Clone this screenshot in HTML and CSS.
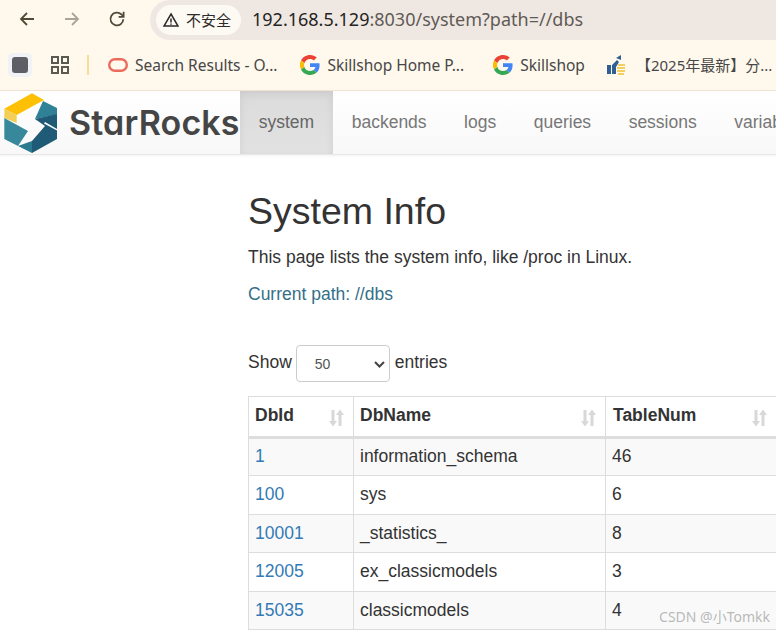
FILE: index.html
```html
<!DOCTYPE html>
<html lang="zh">
<head>
<meta charset="utf-8">
<title>System Info</title>
<link rel="stylesheet" href="styles.css">
</head>
<body>
<div class="window">
  <div class="toolbar">
    <div class="tool-buttons">
      <svg class="tool-icon" viewBox="0 0 18 18"><path d="M16 9H3M9 3 3 9l6 6" class="ic-dark"/></svg>
      <svg class="tool-icon" viewBox="0 0 18 18"><path d="M2 9h13M9 3l6 6-6 6" class="ic-faded"/></svg>
      <svg class="tool-icon" viewBox="0 0 18 18"><path d="M15.3 9.2A6.4 6.4 0 1 1 13.4 4.4L15.4 6.4" class="ic-dark"/><path d="M15.6 1.8v5h-5" class="ic-dark"/></svg>
    </div>
    <div class="omnibox">
      <div class="chip">
        <svg class="warn" viewBox="0 0 16 16"><path d="M8 2 15 14H1Z" class="ic-warn"/><path d="M8 6.4v4M8 11.4v1.4" class="ic-warn"/></svg>
        <span>不安全</span>
      </div>
      <div class="url"><span class="host">192.168.5.129</span>:8030/system?path=//dbs</div>
    </div>
  </div>

  <div class="bookmarks">
    <div class="bm-square"><span></span></div>
    <svg class="bm-grid" viewBox="0 0 18 18"><path d="M1 1h6v6H1zM11 1h6v6h-6zM1 11h6v6H1zM11 11h6v6h-6z"/></svg>
    <div class="bm-divider"></div>
    <div class="bm bm-oracle">
      <svg class="oracle" viewBox="0 0 20 14"><rect x="1.200" y="1.200" width="17.600" height="11.600" rx="5.800"/></svg>
      <span>Search Results - O...</span>
    </div>
    <div class="bm bm-g1">
      <svg class="g" viewBox="0 0 48 48"><path fill="#EA4335" d="M24 9.500c3.500 0 6.700 1.200 9.200 3.600l6.900-6.900C35.900 2.400 30.500 0 24 0 14.600 0 6.500 5.400 2.600 13.200l8 6.200C12.400 13.700 17.700 9.500 24 9.500z"/><path fill="#4285F4" d="M47 24.500c0-1.600-.1-3.100-.4-4.500H24v9h12.900c-.6 3-2.200 5.500-4.700 7.200l7.700 6C44.400 38 47 31.800 47 24.500z"/><path fill="#FBBC05" d="M10.500 28.600A14.500 14.500 0 0 1 10.500 19.400l-8-6.200a24 24 0 0 0 0 21.600z"/><path fill="#34A853" d="M24 48c6.500 0 11.900-2.100 15.900-5.800l-7.700-6c-2.200 1.400-4.900 2.300-8.200 2.300-6.300 0-11.600-4.200-13.500-9.900l-8 6.200C6.500 42.600 14.600 48 24 48z"/></svg>
      <span>Skillshop Home P...</span>
    </div>
    <div class="bm bm-g2">
      <svg class="g" viewBox="0 0 48 48"><path fill="#EA4335" d="M24 9.500c3.500 0 6.700 1.200 9.200 3.600l6.900-6.900C35.900 2.400 30.500 0 24 0 14.600 0 6.500 5.400 2.600 13.200l8 6.200C12.400 13.700 17.700 9.500 24 9.500z"/><path fill="#4285F4" d="M47 24.500c0-1.600-.1-3.100-.4-4.500H24v9h12.900c-.6 3-2.200 5.500-4.700 7.200l7.700 6C44.400 38 47 31.800 47 24.500z"/><path fill="#FBBC05" d="M10.500 28.600A14.500 14.500 0 0 1 10.500 19.400l-8-6.200a24 24 0 0 0 0 21.600z"/><path fill="#34A853" d="M24 48c6.500 0 11.900-2.100 15.900-5.800l-7.700-6c-2.200 1.400-4.900 2.300-8.200 2.300-6.300 0-11.600-4.200-13.500-9.900l-8 6.200C6.500 42.600 14.600 48 24 48z"/></svg>
      <span>Skillshop</span>
    </div>
    <div class="bm bm-thumb">
      <svg class="thumb" viewBox="0 0 18 20"><path fill="#2f5f94" d="M0 10h4v9H0zM5 10l5-5 2 2-3 5v7H5z"/><path fill="#2f5f94" d="M9 3l5-3v5z"/><path fill="#f0d060" d="M11 9h7v2h-7zM10 12h8v2h-8zM10 15h8v2h-8zM11 18h6v2h-6z"/></svg>
      <span>【2025年最新】分...</span>
    </div>
  </div>

  <nav class="navbar">
    <div class="brand">
      <svg class="hex" viewBox="0 0 60 62">
        <path fill="#fdc004" d="M32 1.300 44 8 16.700 23 4.300 16.700Z"/>
        <path fill="#f4cf55" d="M4.300 16.700 16.700 23V31L4.300 26Z"/>
        <path fill="#37889a" d="M4.300 26 28 39 18 54 4.300 47Z"/>
        <path fill="#2f8196" d="M43 9 57 16V22.500L35 27Z"/>
        <path fill="#1f5b76" d="M57 22V47L32 61V49L45 34 35 27Z"/>
        <path fill="#2c7a90" d="M18 54 32 49V61Z"/>
        <path fill="#ffffff" d="M45 30 57 37V38.500L44 31.500Z"/>
      </svg>
      <span class="brand-name">StarRocks</span>
    </div>
    <a class="nav-item active">system</a>
    <a class="nav-item">backends</a>
    <a class="nav-item">logs</a>
    <a class="nav-item">queries</a>
    <a class="nav-item">sessions</a>
    <a class="nav-item">variables</a>
  </nav>

  <main class="content">
    <h1>System Info</h1>
    <p class="lead">This page lists the system info, like /proc in Linux.</p>
    <p class="path">Current path: //dbs</p>
    <div class="length">
      <span>Show</span>
      <select class="length-select"><option>50</option></select>
      <span>entries</span>
    </div>
    <table class="grid">
      <colgroup><col class="c1"><col class="c2"><col class="c3"></colgroup>
      <thead>
        <tr>
          <th><div class="th"><span>DbId</span><svg class="sort" viewBox="0 0 17 18"><path d="M3.500 1h3v11H9l-4 5.500L1 12h2.500zM10.500 17h3V6H16L12 .5 8 6h2.500z"/></svg></div></th>
          <th><div class="th"><span>DbName</span><svg class="sort" viewBox="0 0 17 18"><path d="M3.500 1h3v11H9l-4 5.500L1 12h2.500zM10.500 17h3V6H16L12 .5 8 6h2.500z"/></svg></div></th>
          <th class="th-last"><div class="th"><span>TableNum</span><svg class="sort" viewBox="0 0 17 18"><path d="M3.500 1h3v11H9l-4 5.500L1 12h2.500zM10.500 17h3V6H16L12 .5 8 6h2.500z"/></svg></div></th>
        </tr>
      </thead>
      <tbody>
        <tr class="odd"><td><a>1</a></td><td>information_schema</td><td>46</td></tr>
        <tr><td><a>100</a></td><td>sys</td><td>6</td></tr>
        <tr class="odd"><td><a>10001</a></td><td>_statistics_</td><td>8</td></tr>
        <tr><td><a>12005</a></td><td>ex_classicmodels</td><td>3</td></tr>
        <tr class="odd"><td><a>15035</a></td><td>classicmodels</td><td>4</td></tr>
      </tbody>
    </table>
  </main>
  <div class="watermark">CSDN @小Tomkk</div>
</div>
</body>
</html>
```

FILE: styles.css
```css
* { box-sizing: border-box; }
html, body { margin: 0; height: 100%; overflow: hidden; background: #fff; }
.window { position: relative; width: 776px; height: 630px; overflow: hidden; display: flex; flex-direction: column; font-family: "Liberation Sans", Arial, sans-serif; color: #333; }

.toolbar { height: 40px; flex: none; display: flex; background: #fff8ec; }
.tool-buttons { width: 150px; display: flex; align-items: center; padding: 0 0 3px 18px; gap: 27px; }
.tool-icon { width: 18px; height: 18px; fill: none; }
.ic-dark { stroke: #4f4a38; stroke-width: 1.8; fill: none; }
.ic-faded { stroke: #a8a595; stroke-width: 1.8; fill: none; }
.omnibox { flex: 1; height: 40px; background: #efe8e2; border-radius: 20px 0 0 20px; display: flex; align-items: center; padding-left: 6px; padding-bottom: 1px; }
.chip { width: 85px; height: 30px; background: #fdf9f3; border-radius: 15px; display: flex; align-items: center; gap: 7px; padding-left: 7px; font: 15px "Noto Sans CJK SC", "Noto Sans", sans-serif; color: #2b2b2b; }
.warn { width: 16px; height: 16px; }
.ic-warn { stroke: #2b2b2b; stroke-width: 1.5; fill: none; }
.url { margin-left: 11px; padding-bottom: 2px; font: 18px "Noto Sans", sans-serif; color: #5f5a55; white-space: nowrap; }
.host { color: #26231f; }

.bookmarks { height: 51px; flex: none; background: #fff8ec; display: flex; align-items: center; border-bottom: 1px solid #f0e4d2; font: 15.500px "Noto Sans", "Noto Sans CJK SC", sans-serif; color: #474747; padding-bottom: 1px; }
.bm-square { width: 24px; height: 24px; margin-left: 8px; border-radius: 5px; background: #f0f2f5; display: flex; align-items: center; justify-content: center; }
.bm-square span { width: 16px; height: 16px; border-radius: 3px; background: #5c5f66; }
.bm-grid { width: 18px; height: 18px; margin-left: 19px; fill: none; stroke: #5b5a52; stroke-width: 2; }
.bm-divider { width: 2px; height: 20px; margin-left: 18px; background: #f8dd98; }
.bm { display: flex; align-items: center; gap: 7px; white-space: nowrap; }
.bm-oracle { margin-left: 19px; }
.bm-g1 { margin-left: 22px; }
.bm-g1 span { margin-left: 1px; }
.bm-g2 { margin-left: 29px; }
.bm-thumb { margin-left: 22px; gap: 11px; font-size: 15px; }
.oracle { width: 20px; height: 14px; fill: none; stroke: #ea6a5c; stroke-width: 2.400; }
.g { width: 20px; height: 20px; }
.thumb { width: 18px; height: 20px; }

.navbar { height: 64px; flex: none; display: flex; background: linear-gradient(#fff, #f8f8f8); border-bottom: 1px solid #e7e7e7; box-shadow: 0 1px 3px rgba(0,0,0,.05); }
.brand { width: 240px; flex: none; display: flex; align-items: center; gap: 9px; }
.hex { width: 60px; height: 62px; flex: none; }
.brand-name { font: 600 34px "Inter", sans-serif; font-feature-settings: "cv11"; color: #454545; letter-spacing: .15px; white-space: nowrap; }
.nav-item { padding: 0 18.750px; display: flex; align-items: center; font-size: 17.500px; color: #777; white-space: nowrap; }
.nav-item.active { background: linear-gradient(#dbdbdb, #e2e2e2); box-shadow: inset 0 3px 9px rgba(0,0,0,.075); color: #666; }

.content { padding: 0 0 0 248px; width: 1100px; }
h1 { margin: 32px 0 0; font-size: 37.500px; font-weight: 400; line-height: 48px; color: #333; }
.lead { margin: 9px 0 0; font-size: 17.500px; line-height: 26px; color: #333; }
.path { margin: 11px 0 0; font-size: 17.500px; line-height: 26px; color: #337088; }
.length { margin-top: 38px; height: 37px; display: flex; align-items: center; gap: 4px; font-size: 17.500px; }
.length span { margin-bottom: 3px; }
.length-select { appearance: none; width: 94px; height: 37px; margin-right: 1px; padding: 0 0 0 18px; font: 14px "Liberation Sans", sans-serif; color: #555; border: 1px solid #ccc; border-radius: 4px; background: #fff url("data:image/svg+xml,%3Csvg xmlns='http://www.w3.org/2000/svg' width='11' height='7'%3E%3Cpath d='M1 1l4.500 4.500L10 1' fill='none' stroke='%23444' stroke-width='2'/%3E%3C/svg%3E") no-repeat 77px 15px; }
.grid { margin-top: 14px; border-collapse: collapse; table-layout: fixed; width: 528px; font-size: 17.500px; }
.c1 { width: 105px; }
.c2 { width: 252px; }
.c3 { width: 171px; }
.grid th, .grid td { border: 1px solid #ddd; padding: 0 6px; height: 38.500px; text-align: left; }
.grid thead th { height: 40.500px; border-bottom: 3px solid #ddd; font-weight: 700; padding-right: 8px; }
.grid thead .th-last { padding-left: 7px; }
.th { display: flex; align-items: center; justify-content: space-between; padding-bottom: 2px; }
.sort { width: 17px; height: 18px; margin-top: 6px; fill: #d8d8d8; }
.grid .odd { background: #f9f9f9; }
.grid a { color: #337ab7; }

.watermark { position: absolute; right: 6px; bottom: 4px; font: 14px "Noto Sans", "Noto Sans CJK SC", sans-serif; color: rgba(140,140,140,.6); white-space: nowrap; }
```
